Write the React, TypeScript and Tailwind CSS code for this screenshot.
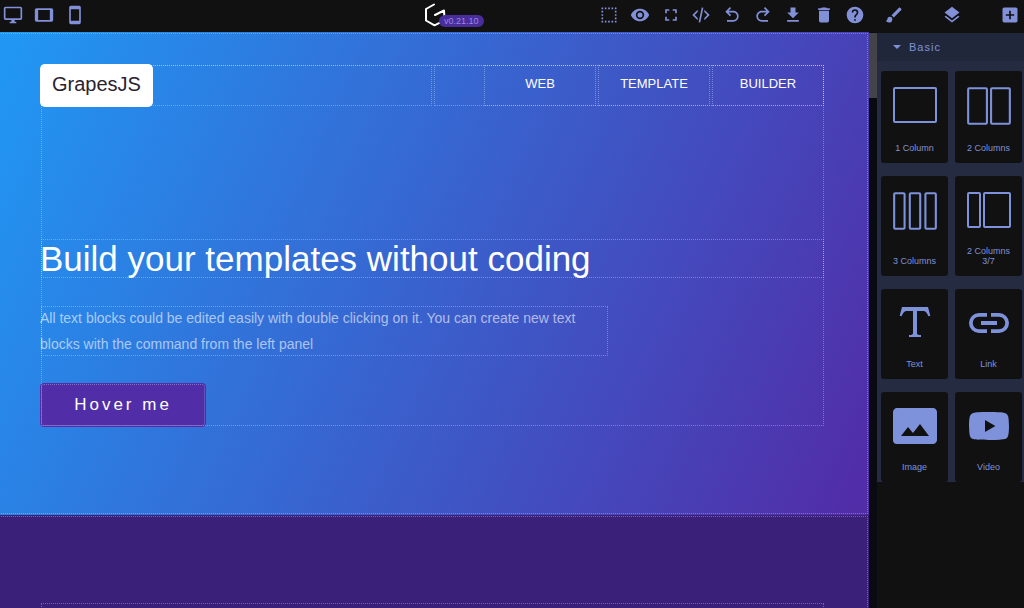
import React from "react";

type IconDef = { label: string; d: string };

const devices: IconDef[] = [
  { label: "Desktop", d: "M21,16H3V4H21M21,2H3C1.89,2 1,2.89 1,4V16A2,2 0 0,0 3,18H10V20H8V22H16V20H14V18H21A2,2 0 0,0 23,16V4C23,2.89 22.1,2 21,2Z" },
  { label: "Tablet", d: "M19,18H5V6H19M21,4H3C1.89,4 1,4.89 1,6V18A2,2 0 0,0 3,20H21A2,2 0 0,0 23,18V6C23,4.89 22.1,4 21,4Z" },
  { label: "Mobile", d: "M17,19H7V5H17M17,1H7C5.89,1 5,1.89 5,3V21A2,2 0 0,0 7,23H17A2,2 0 0,0 19,21V3C19,1.89 18.1,1 17,1Z" },
];

const actions: IconDef[] = [
  { label: "View components", d: "M15,5H17V3H15M15,21H17V19H15M11,5H13V3H11M19,5H21V3H19M19,9H21V7H19M19,21H21V19H19M19,13H21V11H19M19,17H21V15H19M3,5H5V3H3M3,9H5V7H3M3,13H5V11H3M3,17H5V15H3M3,21H5V19H3M11,21H13V19H11M7,21H9V19H7M7,5H9V3H7V5Z" },
  { label: "Preview", d: "M12,9A3,3 0 0,0 9,12A3,3 0 0,0 12,15A3,3 0 0,0 15,12A3,3 0 0,0 12,9M12,17A5,5 0 0,1 7,12A5,5 0 0,1 12,7A5,5 0 0,1 17,12A5,5 0 0,1 12,17M12,4.5C7,4.5 2.73,7.61 1,12C2.73,16.39 7,19.5 12,19.5C17,19.5 21.27,16.39 23,12C21.27,7.61 17,4.5 12,4.5Z" },
  { label: "Fullscreen", d: "M5,5H10V7H7V10H5V5M14,5H19V10H17V7H14V5M17,14H19V19H14V17H17V14M10,17V19H5V14H7V17H10Z" },
  { label: "View code", d: "M12.89,3L14.85,3.4L11.11,21L9.15,20.6L12.89,3M19.59,12L16,8.41V5.58L22.42,12L16,18.41V15.58L19.59,12M1.58,12L8,5.58V8.41L4.41,12L8,15.58V18.41L1.58,12Z" },
  { label: "Undo", d: "M20 13.5C20 17.09 17.09 20 13.5 20H6V18H13.5C16 18 18 16 18 13.5S16 9 13.5 9H7.83L10.91 12.09L9.5 13.5L4 8L9.5 2.5L10.92 3.91L7.83 7H13.5C17.09 7 20 9.91 20 13.5Z" },
  { label: "Redo", d: "M10.5 18H18V20H10.5C6.91 20 4 17.09 4 13.5S6.91 7 10.5 7H16.17L13.08 3.91L14.5 2.5L20 8L14.5 13.5L13.09 12.09L16.17 9H10.5C8 9 6 11 6 13.5S8 18 10.5 18Z" },
  { label: "Import", d: "M5,20H19V18H5M19,9H15V3H9V9H5L12,16L19,9Z" },
  { label: "Clear canvas", d: "M19,4H15.5L14.5,3H9.5L8.5,4H5V6H19M6,19A2,2 0 0,0 8,21H16A2,2 0 0,0 18,19V7H6V19Z" },
  { label: "About", d: "M15.07,11.25L14.17,12.17C13.45,12.89 13,13.5 13,15H11V14.5C11,13.39 11.45,12.39 12.17,11.67L13.41,10.41C13.78,10.05 14,9.55 14,9C14,7.89 13.1,7 12,7A2,2 0 0,0 10,9H8A4,4 0 0,1 12,5A4,4 0 0,1 16,9C16,9.88 15.64,10.67 15.07,11.25M13,19H11V17H13M12,2A10,10 0 0,0 2,12A10,10 0 0,0 12,22A10,10 0 0,0 22,12C22,6.47 17.5,2 12,2Z" },
];

const views: IconDef[] = [
  { label: "Style manager", d: "M20.71,4.63L19.37,3.29C19,2.9 18.35,2.9 17.96,3.29L9,12.25L11.75,15L20.71,6.04C21.1,5.65 21.1,5 20.71,4.63M7,14A3,3 0 0,0 4,17C4,18.31 2.84,19 2,19C2.92,20.22 4.5,21 6,21A4,4 0 0,0 10,17A3,3 0 0,0 7,14Z" },
  { label: "Layers", d: "M12,16L19.36,10.27L21,9L12,2L3,9L4.63,10.27M12,18.54L4.62,12.81L3,14.07L12,21.07L21,14.07L19.37,12.8L12,18.54Z" },
  { label: "Blocks", d: "M17,13H13V17H11V13H7V11H11V7H13V11H17M19,3H5C3.89,3 3,3.89 3,5V19A2,2 0 0,0 5,21H19A2,2 0 0,0 21,19V5C21,3.89 20.1,3 19,3Z" },
];

// `narrow` icons are drawn on a 23 unit wide box and need a little more height.
const blocks: (IconDef & { narrow?: boolean })[] = [
  { label: "1 Column", d: "M2 20h20V4H2v16Zm-1 0V4a1 1 0 0 1 1-1h20a1 1 0 0 1 1 1v16a1 1 0 0 1-1 1H2a1 1 0 0 1-1-1Z" },
  { label: "2 Columns", narrow: true, d: "M2 20h8V4H2v16Zm-1 0V4a1 1 0 0 1 1-1h8a1 1 0 0 1 1 1v16a1 1 0 0 1-1 1H2a1 1 0 0 1-1-1ZM13 20h8V4h-8v16Zm-1 0V4a1 1 0 0 1 1-1h8a1 1 0 0 1 1 1v16a1 1 0 0 1-1 1h-8a1 1 0 0 1-1-1Z" },
  { label: "3 Columns", narrow: true, d: "M2 20h4V4H2v16Zm-1 0V4a1 1 0 0 1 1-1h4a1 1 0 0 1 1 1v16a1 1 0 0 1-1 1H2a1 1 0 0 1-1-1ZM17 20h4V4h-4v16Zm-1 0V4a1 1 0 0 1 1-1h4a1 1 0 0 1 1 1v16a1 1 0 0 1-1 1h-4a1 1 0 0 1-1-1ZM9.5 20h4V4h-4v16Zm-1 0V4a1 1 0 0 1 1-1h4a1 1 0 0 1 1 1v16a1 1 0 0 1-1 1h-4a1 1 0 0 1-1-1Z" },
  { label: "2 Columns 3/7", d: "M2 20h5V4H2v16Zm-1 0V4a1 1 0 0 1 1-1h5a1 1 0 0 1 1 1v16a1 1 0 0 1-1 1H2a1 1 0 0 1-1-1ZM10 20h12V4H10v16Zm-1 0V4a1 1 0 0 1 1-1h12a1 1 0 0 1 1 1v16a1 1 0 0 1-1 1H10a1 1 0 0 1-1-1Z" },
  { label: "Text", d: "M18.5,4L19.66,8.35L18.7,8.61C18.25,7.74 17.79,6.87 17.26,6.43C16.73,6 16.11,6 15.5,6H13V16.5C13,17 13,17.5 13.33,17.75C13.67,18 14.33,18 15,18V19H9V18C9.67,18 10.33,18 10.67,17.75C11,17.5 11,17 11,16.5V6H8.5C7.89,6 7.27,6 6.74,6.43C6.21,6.87 5.75,7.74 5.3,8.61L4.34,8.35L5.5,4H18.5Z" },
  { label: "Link", d: "M3.9,12C3.9,10.29 5.29,8.9 7,8.9H11V7H7A5,5 0 0,0 2,12A5,5 0 0,0 7,17H11V15.1H7C5.29,15.1 3.9,13.71 3.9,12M8,13H16V11H8V13M17,7H13V8.9H17C18.71,8.9 20.1,10.29 20.1,12C20.1,13.71 18.71,15.1 17,15.1H13V17H17A5,5 0 0,0 22,12A5,5 0 0,0 17,7Z" },
  { label: "Image", d: "M21,3H3C2,3 1,4 1,5V19A2,2 0 0,0 3,21H21C22,21 23,20 23,19V5C23,4 22,3 21,3M5,17L8.5,12.5L11,15.5L14.5,11L19,17H5Z" },
  { label: "Video", d: "M10,15L15.19,12L10,9V15M21.56,7.17C21.69,7.64 21.78,8.27 21.84,9.07C21.91,9.87 21.94,10.56 21.94,11.16L22,12C22,14.19 21.84,15.8 21.56,16.83C21.31,17.73 20.73,18.31 19.83,18.56C19.36,18.69 18.5,18.78 17.18,18.84C15.88,18.91 14.69,18.94 13.59,18.94L12,19C7.81,19 5.2,18.84 4.17,18.56C3.27,18.31 2.69,17.73 2.44,16.83C2.31,16.36 2.22,15.73 2.16,14.93C2.09,14.13 2.06,13.44 2.06,12.84L2,12C2,9.81 2.16,8.2 2.44,7.17C2.69,6.27 3.27,5.69 4.17,5.44C4.64,5.31 5.5,5.22 6.82,5.16C8.12,5.09 9.31,5.06 10.41,5.06L12,5C16.19,5 18.8,5.16 19.83,5.44C20.73,5.69 21.31,6.27 21.56,7.17Z" },
];

// Dotted guide drawn just inside every component on the canvas.
const guide = "outline-1 outline-dotted outline-white/30 -outline-offset-2";

function ToolButton({ label, d }: IconDef) {
  return (
    <button type="button" aria-label={label} className="flex size-5 items-center justify-center">
      <svg viewBox="0 0 24 24" className="size-5 fill-current" aria-hidden="true">
        <path d={d} />
      </svg>
    </button>
  );
}

function TopBar() {
  return (
    <header className="flex h-8 shrink-0 items-center bg-[#111111] pr-1 pb-0.5 text-[#8290d8]">
      <div className="grid flex-1 grid-cols-[1fr_auto_1fr] items-center">
        <div className="flex gap-[11px] pl-[3px]">
          {devices.map((i) => (
            <ToolButton key={i.label} {...i} />
          ))}
        </div>
        <a href="#" aria-label="GrapesJS" className="relative block">
          <svg viewBox="0 0 22 24" className="h-6 w-[22px]" fill="none" stroke="#ffffff" strokeWidth="2" strokeLinecap="round" strokeLinejoin="round" aria-hidden="true">
            <path d="M10 1.5L2 6v11.5L10.500 22.300l6-3" />
            <path d="M11 12l9-4.500l.4 6" />
          </svg>
          <span className="absolute top-3 left-[15px] rounded-full bg-[#4a2d9c] px-[5px] text-[9px] leading-3 text-[#9a86e0]">v0.21.10</span>
        </a>
        <div className="ml-auto grid w-[276px] grid-cols-9 justify-items-center">
          {actions.map((i) => (
            <ToolButton key={i.label} {...i} />
          ))}
        </div>
      </div>
      <div className="ml-3.5 flex w-[136px] justify-between">
        {views.map((i) => (
          <ToolButton key={i.label} {...i} />
        ))}
      </div>
    </header>
  );
}

function Canvas() {
  return (
    <main className="flex min-w-0 flex-1 flex-col overflow-hidden">
      <section className={`-ml-0.5 shrink-0 bg-[linear-gradient(114deg,#2196f3_2%,#512da8_98%)] pt-8 pr-11 pb-[88px] pl-[42px] ${guide}`}>
        <div className={guide}>
          <nav className="grid h-[43px] grid-cols-2 text-[13px] text-white">
            <div className={`flex items-center ${guide}`}>
              <a href="#" className="rounded-[5px] bg-white px-3 pb-0.5 text-xl leading-[41px] text-[#2b2230]">
                GrapesJS
              </a>
            </div>
            <div className={`flex justify-end ${guide}`}>
              {["WEB", "TEMPLATE", "BUILDER"].map((t) => (
                <a key={t} href="#" className={`flex w-[114px] items-center justify-center pb-1 ${guide}`}>
                  {t}
                </a>
              ))}
            </div>
          </nav>
          <h1 className={`mt-[131px] text-[35px] leading-[41px] text-white ${guide}`}>Build your templates without coding</h1>
          <p className={`mt-[26px] max-w-[569px] text-sm leading-[26px] text-white/60 ${guide}`}>
            All text blocks could be edited easily with double clicking on it. You can create new text blocks with the command from the left panel
          </p>
          <button type="button" className={`mt-[26px] block h-11 w-[166px] rounded-[4px] bg-[#512da8] text-[17px] tracking-[3px] text-white ${guide}`}>
            Hover me
          </button>
        </div>
      </section>
      <section className={`-ml-0.5 flex flex-1 flex-col bg-[#3a2078] pt-[87px] pr-11 pl-[42px] ${guide}`}>
        <div className={`h-40 shrink-0 ${guide}`} />
      </section>
    </main>
  );
}

function BlocksPanel() {
  return (
    <aside className="w-[147px] shrink-0 bg-[#111111] pt-px">
      <div className="bg-[#252c42]">
        <button type="button" aria-expanded="true" className="flex h-7 w-full items-center gap-2 bg-[#20273b] pl-4 text-[11px] tracking-[1px] text-[#7e92dc]">
          <svg viewBox="0 0 8 4" className="h-1 w-2 fill-current" aria-hidden="true">
            <path d="M0 0h8L4 4z" />
          </svg>
          Basic
        </button>
        <div className="grid grid-cols-2 gap-x-[7px] gap-y-[13px] pt-2.5 pr-0.5 pl-1">
          {blocks.map((b) => (
            <button key={b.label} type="button" className="flex flex-col items-center justify-between gap-3 rounded-[3px] bg-[#111111] px-2.5 py-2.5 text-[9px] leading-[10px] text-[#7e92dc]">
              <svg
                viewBox={b.narrow ? "0 0 23 24" : "0 0 24 24"}
                className={b.narrow ? "h-[50px] w-12 shrink-0 fill-current" : "h-12 w-12 shrink-0 fill-current"}
                aria-hidden="true"
              >
                <path d={b.d} />
              </svg>
              <span>{b.label}</span>
            </button>
          ))}
        </div>
      </div>
    </aside>
  );
}

export default function App() {
  return (
    <div className="flex h-screen flex-col overflow-hidden bg-[#111111] font-['Liberation_Sans',Arial,sans-serif]">
      <TopBar />
      <div className="flex min-h-0 flex-1">
        <Canvas />
        <div className="w-2 shrink-0 bg-[#0a0a12] pt-px" aria-hidden="true">
          <div className="h-[65px] bg-[#434349]" />
        </div>
        <BlocksPanel />
      </div>
    </div>
  );
}
